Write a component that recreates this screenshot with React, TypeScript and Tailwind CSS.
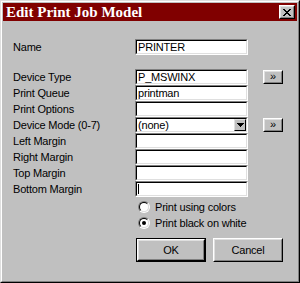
import React from 'react';

const FONT = 'font-["Liberation_Sans",Arial,sans-serif] text-[11px] tracking-[-0.2px] text-black';

const rows = [
  { label: 'Device Type', value: 'P_MSWINX', more: true },
  { label: 'Print Queue', value: 'printman' },
  { label: 'Print Options', value: '' },
  { label: 'Device Mode (0-7)', value: '(none)', combo: true, more: true },
  { label: 'Left Margin', value: '' },
  { label: 'Right Margin', value: '' },
  { label: 'Top Margin', value: '' },
  { label: 'Bottom Margin', value: '', caret: true },
];

// win95 sunken text field, 16px tall
const Field = ({ value, combo, caret }: { value: string; combo?: boolean; caret?: boolean }) => (
  <div className="w-[113px] h-[16px] border border-t-[#808080] border-l-[#808080] border-b-white border-r-white">
    <div className="h-full border border-t-black border-l-black border-b-[#dfdfdf] border-r-[#dfdfdf] bg-white flex items-center relative">
      {caret && <div className="absolute left-[1px] top-[1px] bottom-[1px] w-[1px] bg-black" />}
      <span className="pl-[1px] leading-none flex-1 whitespace-nowrap">{value}</span>
      {combo && (
        <div className="w-[12px] h-[12px] mr-0 border border-t-[#dfdfdf] border-l-[#dfdfdf] border-b-black border-r-black bg-[#c0c0c0] flex items-center justify-center">
          <svg width="7" height="4" viewBox="0 0 7 4" shapeRendering="crispEdges">
            <path d="M0 0h7v1H0zM1 1h5v1H1zM2 2h3v1H2zM3 3h1v1H3z" fill="#000" />
          </svg>
        </div>
      )}
    </div>
  </div>
);

const Raised = ({ className, children }: { className: string; children: React.ReactNode }) => (
  <div className={`border border-t-white border-l-white border-b-black border-r-black bg-[#c0c0c0] ${className}`}>
    <div className="w-full h-full border border-t-[#dfdfdf] border-l-[#dfdfdf] border-b-[#808080] border-r-[#808080] flex items-center justify-center">
      {children}
    </div>
  </div>
);

const Radio = ({ checked, label }: { checked?: boolean; label: string }) => (
  <div className="flex items-center h-[16px] pl-[3px]">
    <span className="w-[12px] h-[12px] rounded-full border border-t-[#808080] border-l-[#808080] border-b-white border-r-white">
      <span className="w-full h-full rounded-full border border-t-black border-l-black border-b-[#dfdfdf] border-r-[#dfdfdf] bg-white flex items-center justify-center">
        {checked && <span className="w-[4px] h-[4px] rounded-full bg-black" />}
      </span>
    </span>
    <span className="ml-[5px]">{label}</span>
  </div>
);

const CloseGlyph = () => (
  <svg width="8" height="7" viewBox="0 0 8 7" shapeRendering="crispEdges">
    <path
      d="M0 0h2v1H0zM6 0h2v1H6zM1 1h2v1H1zM5 1h2v1H5zM2 2h4v1H2zM3 3h2v1H3zM2 4h4v1H2zM1 5h2v1H1zM5 5h2v1H5zM0 6h2v1H0zM6 6h2v1H6z"
      fill="#000"
    />
  </svg>
);

export default function App() {
  return (
    <div className={`w-[300px] h-[283px] bg-[#c0c0c0] border border-t-[#dfdfdf] border-l-[#dfdfdf] border-b-black border-r-black ${FONT}`}>
      <div className="h-full border border-t-white border-l-white border-b-[#808080] border-r-[#808080] p-[1px] flex flex-col">
        {/* Title bar */}
        <div className="h-[18px] bg-[#800000] flex items-center justify-between pl-[3px] pr-[2px]">
          <span className='font-["Liberation_Serif",serif] font-bold text-[15px] tracking-normal text-white leading-none'>
            Edit Print Job Model
          </span>
          <Raised className="w-[16px] h-[14px]">
            <CloseGlyph />
          </Raised>
        </div>

        <div className="pl-[10px]">
          {/* Name */}
          <div className="flex items-center h-[16px] mt-[18px]">
            <span className="w-[122px]">Name</span>
            <Field value="PRINTER" />
          </div>

          {/* Device fields */}
          <div className="mt-[14px]">
            {rows.map((r) => (
              <div key={r.label} className="flex items-center h-[16px]">
                <span className="w-[122px]">{r.label}</span>
                <Field value={r.value} combo={r.combo} caret={r.caret} />
                {r.more && (
                  <Raised className="w-[20px] h-[14px] ml-[15px]">
                    <span className="leading-none text-[11px] -mt-[1px]">»</span>
                  </Raised>
                )}
              </div>
            ))}
          </div>

          {/* Radio options */}
          <div className="ml-[122px] mt-[2px]">
            <Radio label="Print using colors" />
            <Radio checked label="Print black on white" />
          </div>

          {/* Buttons */}
          <div className="ml-[123px] mt-[7px] flex gap-[7px]">
            <div className="w-[70px] h-[24px] border border-black">
              <Raised className="w-full h-full">
                <span>OK</span>
              </Raised>
            </div>
            <Raised className="w-[70px] h-[24px]">
              <span>Cancel</span>
            </Raised>
          </div>
        </div>
      </div>
    </div>
  );
}
